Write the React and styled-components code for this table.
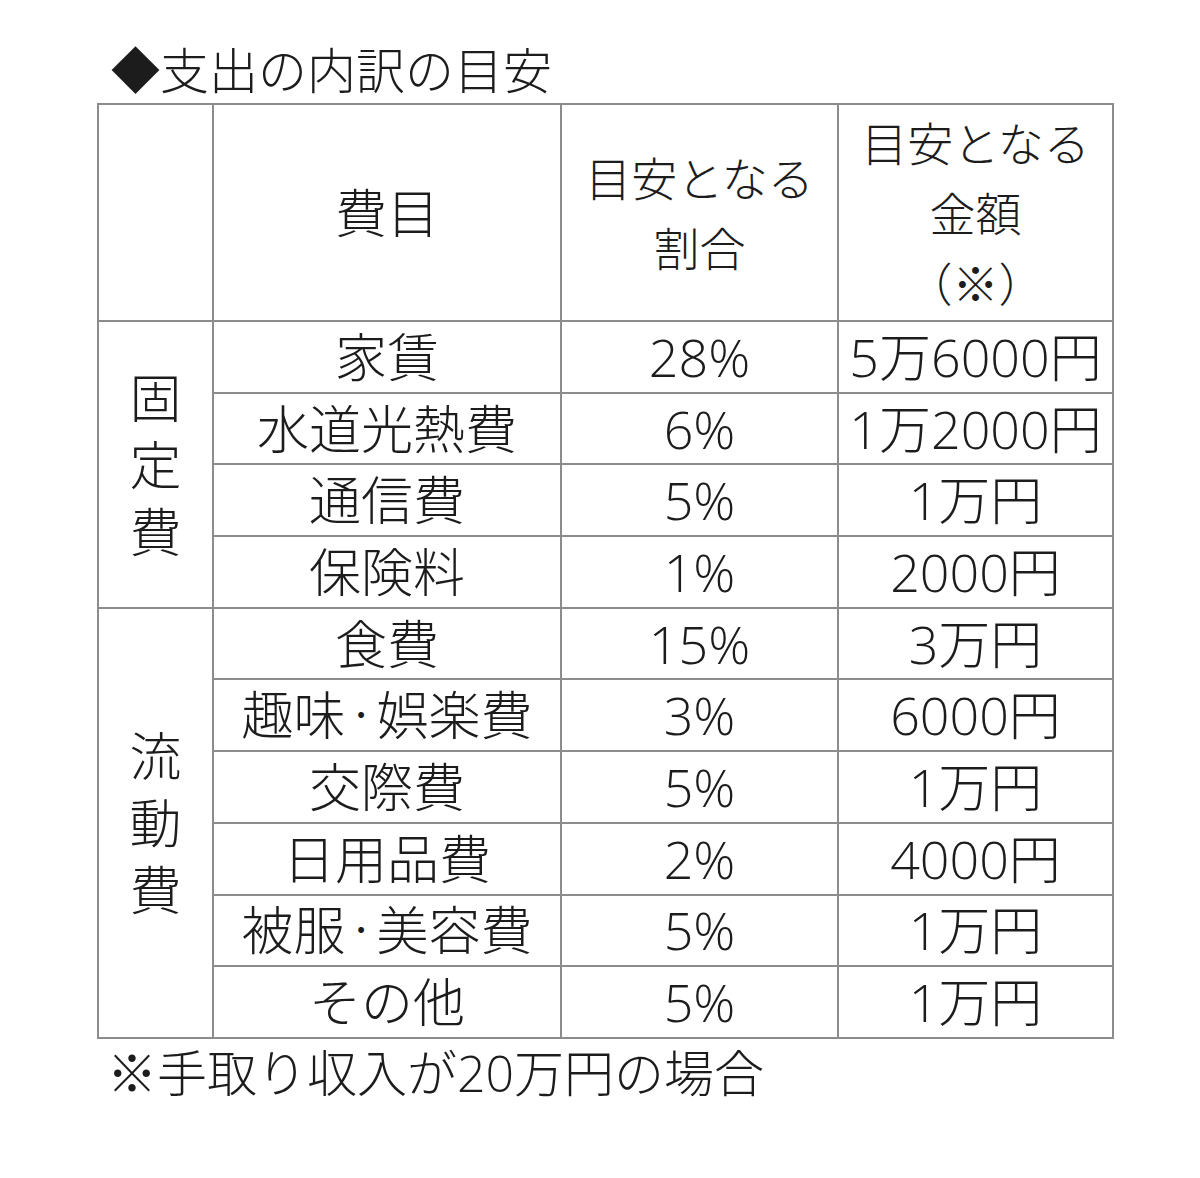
import React from 'react';
import styled, { createGlobalStyle } from 'styled-components';

const GlobalStyle = createGlobalStyle`
  html, body {
    margin: 0;
    padding: 0;
    background: #ffffff;
  }
  body {
    font-family: "Open Sans", "Noto Sans CJK JP", sans-serif;
    color: #1c1c1c;
  }
`;

const fixedRows = [
  { name: '家賃', rate: '28%', amount: '5万6000円' },
  { name: '水道光熱費', rate: '6%', amount: '1万2000円' },
  { name: '通信費', rate: '5%', amount: '1万円' },
  { name: '保険料', rate: '1%', amount: '2000円' },
];

const variableRows = [
  { name: '食費', rate: '15%', amount: '3万円' },
  { name: '趣味・娯楽費', rate: '3%', amount: '6000円' },
  { name: '交際費', rate: '5%', amount: '1万円' },
  { name: '日用品費', rate: '2%', amount: '4000円' },
  { name: '被服・美容費', rate: '5%', amount: '1万円' },
  { name: 'その他', rate: '5%', amount: '1万円' },
];

const groups = [
  { label: ['固', '定', '費'], rows: fixedRows },
  { label: ['流', '動', '費'], rows: variableRows },
];

// the middle dot is set narrow, as in the source table
const renderName = (name) =>
  name.split('・').flatMap((part, i) =>
    i === 0 ? [part] : [<Dot key={i}>・</Dot>, part]
  );

export default function App() {
  return (
    <Page>
      <GlobalStyle />
      <Title>◆支出の内訳の目安</Title>
      <Table>
        <colgroup>
          <col style={{ width: 115 }} />
          <col style={{ width: 348 }} />
          <col style={{ width: 277 }} />
          <col style={{ width: 275 }} />
        </colgroup>
        <thead>
          <HeadRow>
            <Cell />
            <Cell>費目</Cell>
            <Cell>
              <Lines>
                <span>目安となる</span>
                <span>割合</span>
              </Lines>
            </Cell>
            <Cell>
              <Lines>
                <span>目安となる</span>
                <span>金額</span>
                <span>（※）</span>
              </Lines>
            </Cell>
          </HeadRow>
        </thead>
        {groups.map((group) => (
          <tbody key={group.label.join('')}>
            {group.rows.map((row, i) => (
              <BodyRow key={row.name}>
                {i === 0 && (
                  <Cell rowSpan={group.rows.length}>
                    <VerticalLabel>
                      {group.label.map((ch) => (
                        <span key={ch}>{ch}</span>
                      ))}
                    </VerticalLabel>
                  </Cell>
                )}
                <Cell>{renderName(row.name)}</Cell>
                <Cell>{row.rate}</Cell>
                <Cell>{row.amount}</Cell>
              </BodyRow>
            ))}
          </tbody>
        ))}
      </Table>
      <Note>※手取り収入が20万円の場合</Note>
    </Page>
  );
}

const Page = styled.div`
  width: 1200px;
  height: 1178px;
  padding: 43px 0 0 97px;
  box-sizing: border-box;
`;

const Title = styled.h1`
  margin: 0 0 6px 14px;
  font-size: 49px;
  font-weight: 300;
  line-height: 54px;
`;

const Table = styled.table`
  border-collapse: collapse;
  table-layout: fixed;
  width: 1015px;
  font-size: 52px;
  font-weight: 300;
`;

const HeadRow = styled.tr`
  height: 217px;
`;

const BodyRow = styled.tr`
  height: 71.7px;
`;

const Cell = styled.td`
  border: 2px solid #8c8c8c;
  padding: 0;
  text-align: center;
  vertical-align: middle;
  line-height: 1;
  white-space: nowrap;
`;

const Dot = styled.span`
  font-size: 0.6em;
  vertical-align: 0.3em;
`;

const Lines = styled.div`
  display: flex;
  flex-direction: column;
  align-items: center;
  line-height: 70px;
  font-size: 46px;
`;

const VerticalLabel = styled.div`
  display: flex;
  flex-direction: column;
  align-items: center;
  line-height: 67px;
`;

const Note = styled.p`
  margin: 4px 0 0 10px;
  font-size: 50px;
  font-weight: 300;
  line-height: 60px;
`;
